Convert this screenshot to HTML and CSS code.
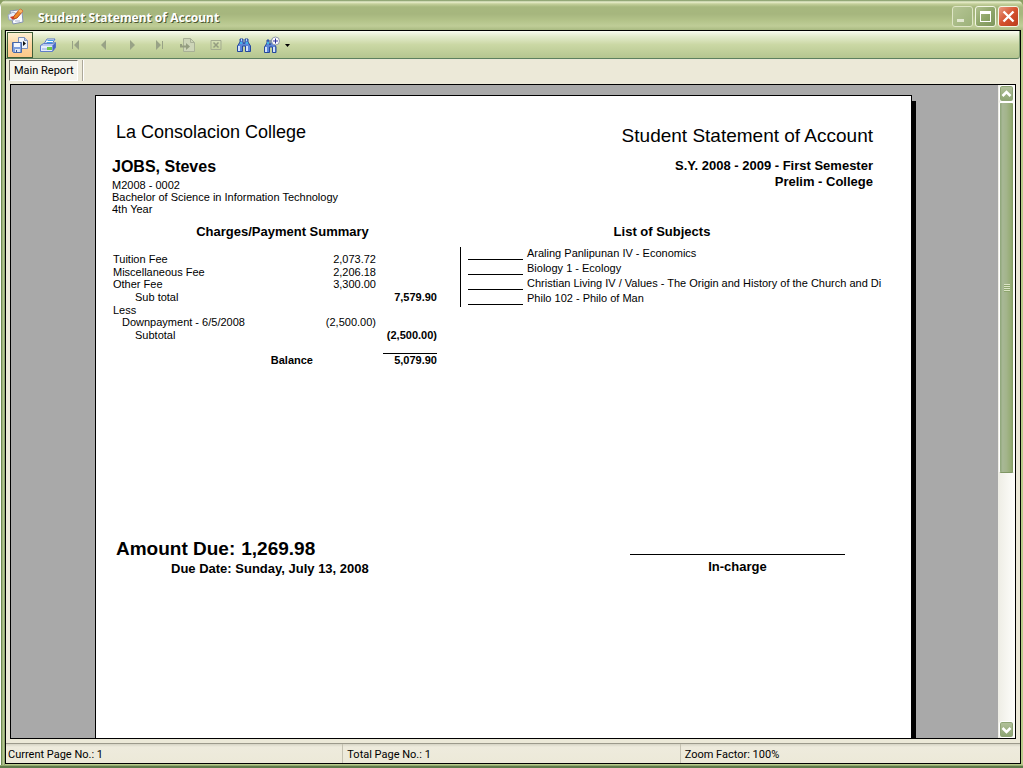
FILE: index.html
```html
<!DOCTYPE html>
<html lang="en">
<head>
<meta charset="utf-8">
<title>Student Statement of Account</title>
<link rel="stylesheet" href="styles.css">
</head>
<body>
<div class="window">
  <header class="titlebar">
    <svg class="app-icon" width="18" height="18" viewBox="0 0 18 18" aria-hidden="true">
      <path d="M3 4l8-1 4 2 1 10-10 2z" fill="#fafcff" stroke="#8492b4"/>
      <path d="M1 8l5-3 4 2-3 6-5 0z" fill="#e8edf8" stroke="#9aa7c6"/>
      <path d="M6 12l1-3 6-7 3 2-6 7z" fill="#f08a28" stroke="#b9481c"/>
      <path d="M13 2l3 2-2 2-3-2z" fill="#f7b66a"/>
      <path d="M3 10l4-1-1 4z" fill="#cf3a22"/>
      <path d="M8 14h5" stroke="#aab4cc"/>
    </svg>
    <h1 class="title">Student Statement of Account</h1>
    <div class="caption-buttons">
      <button class="caption min" aria-label="Minimize"><svg width="19" height="19" viewBox="0 0 19 19"><path d="M4 12h7v3H4z" fill="#e2e8d0"/></svg></button>
      <button class="caption" aria-label="Maximize"><svg width="19" height="19" viewBox="0 0 19 19"><path d="M4 4h11v11H4zM5 7v7h9V7z" fill="#fff" fill-rule="evenodd"/></svg></button>
      <button class="caption close" aria-label="Close"><svg width="19" height="19" viewBox="0 0 19 19"><path d="M4.500 4.500l10 10M14.500 4.500l-10 10" stroke="#fff" stroke-width="2.400"/></svg></button>
    </div>
  </header>

  <main class="client">
    <nav class="toolbar" aria-label="Report tools">
      <button class="tool active" aria-label="Export report">
        <svg width="18" height="18" viewBox="0 0 18 18">
          <path d="M7.500 1.500h6l3 3v8h-9z" fill="#eef3fb" stroke="#7c8fb8"/>
          <path d="M13.500 1.500v3h3" fill="#b9c8e6" stroke="#7c8fb8"/>
          <path d="M12 5l3 2.500-3 2.500z" fill="#111"/>
          <path d="M1.500 6.500h9v10h-8l-1-1z" fill="#7f9fdc" stroke="#4a68a6"/>
          <path d="M3 7h6v4H3z" fill="#f4f7fd"/>
          <path d="M4 13h5v3H4z" fill="#dfe6f2"/><path d="M5 14h1v2H5z" fill="#35538f"/>
        </svg>
      </button>
      <button class="tool" aria-label="Print">
        <svg width="18" height="18" viewBox="0 0 18 18">
          <path d="M5 8l3-5h8l-3 5z" fill="#fff" stroke="#5577c8"/>
          <path d="M8.500 4.500h6M7.500 6.500h6" stroke="#3f9ee8"/>
          <path d="M1.500 9.500l3-2h9l3-1v5l-3 4h-12z" fill="#b7c9f2" stroke="#5f7cc8"/>
          <path d="M2 10h11v5H2z" fill="#e6edfb"/>
          <path d="M3 13h5" stroke="#8fa6de"/>
          <path d="M8 11h5v3H8z" fill="#6cc84a"/>
          <path d="M13.500 9.500l3-3v5l-3 4z" fill="#4668c4"/>
        </svg>
      </button>
      <button class="tool" disabled aria-label="First page"><svg width="10" height="10" viewBox="0 0 10 10"><path d="M1 1h1v8H1zM8 0v10L3 5z" fill="#98a286"/></svg></button>
      <button class="tool" disabled aria-label="Previous page"><svg width="10" height="10" viewBox="0 0 10 10"><path d="M7 0v10L2 5z" fill="#98a286"/></svg></button>
      <button class="tool" disabled aria-label="Next page"><svg width="10" height="10" viewBox="0 0 10 10"><path d="M3 0v10l5-5z" fill="#98a286"/></svg></button>
      <button class="tool" disabled aria-label="Last page"><svg width="10" height="10" viewBox="0 0 10 10"><path d="M7 1h1v8H7zM1 0v10l5-5z" fill="#98a286"/></svg></button>
      <button class="tool" disabled aria-label="Go to page">
        <svg width="16" height="16" viewBox="0 0 16 16">
          <path d="M3.500 1.500h7l4 4v9h-11z" fill="#cdd5b8" stroke="#a8b096"/>
          <path d="M10.500 1.500v4h4" fill="none" stroke="#a8b096"/>
          <path d="M1 7v2.500h6" fill="none" stroke="#949d80" stroke-width="2"/>
          <path d="M6 6l4 3.500-4 3.500z" fill="#949d80"/>
        </svg>
      </button>
      <button class="tool" disabled aria-label="Close view">
        <svg width="12" height="10" viewBox="0 0 12 10"><path d="M1 .5h10v9H1z" fill="none" stroke="#a3ab90"/><path d="M3.500 2.500l5 5M8.500 2.500l-5 5" stroke="#949d80" stroke-width="1.500"/></svg>
      </button>
      <button class="tool" aria-label="Find text">
        <svg width="14" height="14" viewBox="0 0 14 14">
          <path d="M3 1h3v3l1 2 1-2V1h3v3l2.500 4v5.500h-5V8h-3v5.500h-5V8L3 4z" fill="#5d86d8" stroke="#26489c"/>
          <path d="M3 5h2M9 5h2" stroke="#3db4e8" stroke-width="2"/>
          <path d="M2 8v5M10 8v5" stroke="#d2e2fb" stroke-width="2"/>
          <path d="M4 2h1M9 2h1" stroke="#b5d4f8" stroke-width="2"/>
        </svg>
      </button>
      <button class="tool" aria-label="Zoom" aria-haspopup="menu">
        <svg width="18" height="18" viewBox="0 0 18 18">
          <path d="M4 4h2v3l1 2 1-2V4h3v3l2 4v5.500H9.500V11h-3v5.500h-5V11L4 7z" fill="#5d86d8" stroke="#26489c"/>
          <path d="M3 11v5M11 11v5" stroke="#d2e2fb" stroke-width="2"/>
          <path d="M4 7h2" stroke="#3db4e8" stroke-width="2"/>
          <circle cx="12.500" cy="5" r="4" fill="#fff" stroke="#8f97a8"/>
          <path d="M12.500 2.500v5M10 5h5" stroke="#2a2f9a"/>
        </svg>
      </button>
      <svg class="caret" width="5" height="3" viewBox="0 0 5 3" aria-hidden="true"><path d="M0 0h5L2.500 3z" fill="#000"/></svg>
    </nav>

    <div class="tabs"><button class="tab">Main Report</button></div>

    <div class="viewer">
      <div class="canvas">
        <article class="paper">
          <div class="head">
            <div class="person">
              <h2 class="school">La Consolacion College</h2>
              <h3 class="student">JOBS, Steves</h3>
              <p>M2008 - 0002</p>
              <p>Bachelor of Science in Information Technology</p>
              <p>4th Year</p>
            </div>
            <div class="document">
              <h2 class="doc-title">Student Statement of Account</h2>
              <p>S.Y. 2008 - 2009 - First Semester</p>
              <p>Prelim - College</p>
            </div>
          </div>
          <div class="columns">
            <section class="charges">
              <h4>Charges/Payment Summary</h4>
              <table>
                <colgroup><col><col class="col-amount"><col class="col-total"></colgroup>
                <tr><td>Tuition Fee</td><td>2,073.72</td><td></td></tr>
                <tr><td>Miscellaneous Fee</td><td>2,206.18</td><td></td></tr>
                <tr><td>Other Fee</td><td>3,300.00</td><td></td></tr>
                <tr><td class="in2">Sub total</td><td></td><td>7,579.90</td></tr>
                <tr><td>Less</td><td></td><td></td></tr>
                <tr><td class="in1">Downpayment - 6/5/2008</td><td>(2,500.00)</td><td></td></tr>
                <tr><td class="in2">Subtotal</td><td></td><td>(2,500.00)</td></tr>
              </table>
              <div class="balance"><span>Balance</span><strong>5,079.90</strong></div>
            </section>
            <section class="subjects">
              <h4>List of Subjects</h4>
              <ul>
                <li>Araling Panlipunan IV - Economics</li>
                <li>Biology 1 - Ecology</li>
                <li>Christian Living IV / Values - The Origin and History of the Church and Di</li>
                <li>Philo 102 - Philo of Man</li>
              </ul>
            </section>
          </div>
          <div class="foot">
            <div class="due">
              <p class="amount"><span>Amount Due:</span><span>1,269.98</span></p>
              <p class="date">Due Date: Sunday, July 13, 2008</p>
            </div>
            <p class="sign">In-charge</p>
          </div>
        </article>
      </div>
      <div class="scrollbar">
        <button class="arrow" aria-label="Scroll up"><svg width="11" height="8" viewBox="0 0 11 8"><path d="M1.500 6l4-4 4 4" fill="none" stroke="#fff" stroke-width="2.500"/></svg></button>
        <div class="track"><div class="thumb"><i class="grip"></i></div></div>
        <button class="arrow" aria-label="Scroll down"><svg width="11" height="8" viewBox="0 0 11 8"><path d="M1.500 2l4 4 4-4" fill="none" stroke="#fff" stroke-width="2.500"/></svg></button>
      </div>
    </div>

    <footer class="status">
      <span>Current Page No.: 1</span>
      <span>Total Page No.: 1</span>
      <span>Zoom Factor: 100%</span>
    </footer>
  </main>
</div>
</body>
</html>
```

FILE: styles.css
```css
* { box-sizing: border-box; margin: 0; padding: 0; }
body { background: #8a9f63; font: 11px/13px Roboto, Tahoma, sans-serif; color: #000; }
button { font: inherit; color: inherit; border: 0; background: none; }
svg { display: block; }

.window {
  height: 100vh;
  display: flex;
  flex-direction: column;
  padding: 0 2px 4px 5px;
  background: linear-gradient(to right, #fff 0 1px, #6f8a52 1px 2px, #9db27c 2px 3px, #b5c68f 3px 4px, #8fa870 4px 5px, #b9cb8c 5px);
  border-radius: 7px 7px 0 0;
  box-shadow: inset 0 -2px #5f7a4a, inset 0 -3px #93ab70;
  overflow: hidden;
}
.titlebar {
  flex: 0 0 30px;
  display: flex;
  align-items: center;
  margin: 0 -2px 0 -4px;
  padding: 4px 4px 0 6px;
  background: linear-gradient(#76905a 0, #eaf0cf 2px, #c3cf9a 4px, #a7b87e 7px, #a6b67e 14px, #b2c288 20px, #bfcd97 26px, #a9ba82 30px);
}
.app-icon { margin: -2px 13px 0 0; }
.title { flex: 1; padding-top: 1px; font: bold 12px/16px "Noto Sans", sans-serif; color: #fff; text-shadow: 1px 1px #4b5731; }
.caption-buttons { display: flex; gap: 2px; }
.caption {
  width: 21px;
  height: 21px;
  margin-top: -1px;
  border: 1px solid #f3f6e4;
  border-radius: 3px;
  background: linear-gradient(135deg, #b0c08e, #8da468 55%, #7e955c);
}
.caption.min { border-color: #dfe6c6; background: linear-gradient(135deg, #b5c594, #9db27a); }
.caption.close { background: linear-gradient(135deg, #e99b83, #d4512d 50%, #bb3c1b); }

.client {
  flex: 1;
  min-height: 0;
  display: flex;
  flex-direction: column;
  border: 1px solid #000;
  background: #ece9d8;
}
.toolbar {
  flex: 0 0 28px;
  display: flex;
  align-items: center;
  background: linear-gradient(#fafcf0, #e3ebcc 20%, #cbd8a5 50%, #b5c690);
  border-bottom: 1px solid #5d8060;
  border-right: 1px solid #7f9a72;
  border-radius: 0 0 3px 0;
}
.tool { width: 28px; height: 26px; display: flex; align-items: center; justify-content: center; }
.tool.active { width: 26px; margin: 0 1px; border: 1px solid #3f5d38; background: linear-gradient(#fdf0d2, #fdd5a0 50%, #fcc98a); }
.caret { margin: 1px 0 0 -1px; }

.tabs { flex: 0 0 25px; display: flex; padding: 1px 3px 3px; }
.tab {
  padding: 1px 3px 1px 4px;
  border: 1px solid #716f64;
  border-right-color: #fff;
  border-bottom-color: #fff;
  background: #f6f5ee;
}
.tabs::after { content: ""; margin-left: 4px; border-left: 1px solid #aca899; border-right: 1px solid #fff; }

.viewer { flex: 1; min-height: 0; display: flex; margin: 0 4px; border: 1px solid #000; background: #a9a9a9; }
.canvas { flex: 1; min-width: 0; padding: 10px 86px 0 84px; overflow: hidden; }
.paper {
  min-height: 1056px;
  padding: 0 38px 0 16px;
  border: 1px solid #000;
  background: #fff;
  box-shadow: 4px 6px #000;
  font: 11px/12px "Liberation Sans", Arial, sans-serif;
}
.head { display: flex; justify-content: space-between; height: 124px; }
.school { margin: 25px 0 0 4px; font-size: 18px; line-height: 22px; font-weight: normal; }
.student { margin: 14px 0 8px; font-size: 16px; line-height: 20px; }
.student + p { margin-top: -6px; }
.document { padding-top: 28px; text-align: right; font-size: 13px; line-height: 16px; font-weight: bold; }
.doc-title { margin-bottom: 10px; font-size: 19px; line-height: 24px; font-weight: normal; }
h4 { font-size: 13px; line-height: 16px; text-align: center; }

.columns { display: grid; grid-template-columns: minmax(0, 348fr) minmax(0, 413fr); margin-top: 4px; height: 308px; }
.charges { padding: 0 23px 0 1px; }
.charges h4 { padding-left: 15px; }
.charges table { width: 100%; margin-top: 12px; border-collapse: collapse; table-layout: fixed; }
.col-amount, .col-total { width: 61px; }
.charges tr { height: 13px; line-height: 12px; }
.charges tr:nth-child(3n) { height: 12px; }
.charges td { white-space: nowrap; }
.charges td:nth-child(n+2) { text-align: right; }
.charges td:nth-child(3) { font-weight: bold; }
.charges .in1 { padding-left: 9px; }
.charges .in2 { padding-left: 22px; }
.balance { display: flex; justify-content: flex-end; gap: 70px; margin-top: 12px; font-weight: bold; line-height: 13px; }
.balance strong { width: 54px; text-align: right; border-top: 1px solid #000; }
.balance span { padding-top: 1px; }
.subjects h4 { padding-right: 9px; }
.subjects ul { list-style: none; margin-top: 7px; padding-left: 7px; border-left: 1px solid #000; }
.subjects li { display: flex; height: 15px; white-space: nowrap; }
.subjects li::before { content: ""; flex: none; width: 55px; height: 12px; margin-right: 4px; border-bottom: 1px solid #000; }

.foot { display: flex; justify-content: space-between; padding: 4px 28px 0 4px; }
.amount { display: flex; gap: 6px; padding-top: 1px; font-size: 19px; line-height: 24px; font-weight: bold; }
.date { padding-left: 55px; font-size: 13px; line-height: 16px; font-weight: bold; }
.sign { width: 215px; margin-top: 18px; padding-top: 4px; border-top: 1px solid #000; text-align: center; font-size: 13px; line-height: 16px; font-weight: bold; }

.scrollbar { flex: 0 0 17px; display: flex; flex-direction: column; padding: 0 1px; background: linear-gradient(to right, #eeede5, #fefefb); }
.arrow {
  flex: 0 0 17px;
  display: flex;
  align-items: center;
  justify-content: center;
  border: 1px solid #fff;
  border-radius: 3px;
  background: linear-gradient(#b3c29c, #8ba370);
  box-shadow: inset 0 0 0 1px #8fa576;
}
.track { flex: 1; }
.thumb {
  height: 60%;
  display: flex;
  align-items: center;
  justify-content: center;
  border: 1px solid #fff;
  border-bottom-color: #7f9664;
  border-radius: 2px;
  background: linear-gradient(to right, #8da578, #a8b896 20%, #a3b48b 50%, #94ab72 85%, #859c66);
}
.grip { width: 6px; height: 8px; background: repeating-linear-gradient(#dbe4c4 0 1px, #8da56e 1px 2px); }

.status {
  flex: 0 0 20px;
  display: grid;
  grid-template-columns: 337fr 338fr 341fr;
  margin-top: 4px;
  border-top: 1px solid #9c9a8c;
  background: linear-gradient(#d6d4c5, #eeebdd 3px, #ece9d8);
  line-height: 16px;
}
.status span { padding: 3px 0 0 2px; }
.status span + span { padding-left: 4px; border-left: 1px solid #c5c2b2; }
```
